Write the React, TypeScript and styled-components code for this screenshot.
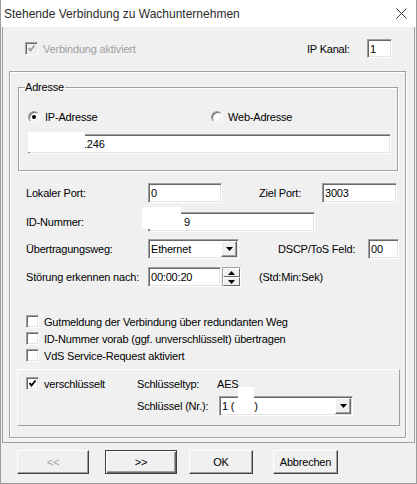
import React from "react";
import styled, { createGlobalStyle } from "styled-components";

const GlobalStyle = createGlobalStyle`
  html, body {
    margin: 0;
    padding: 0;
    background: #f0f0f0;
  }
  body {
    font-family: "Liberation Sans", Arial, sans-serif;
    font-size: 11px;
    letter-spacing: -0.2px;
    color: #000;
  }
  * {
    box-sizing: border-box;
  }
`;

const Window = styled.div`
  width: 417px;
  height: 484px;
  display: flex;
  flex-direction: column;
  background: #f0f0f0;
  border: 1px solid #9c9c9c;
  border-top: none;
`;

const TitleBar = styled.div`
  height: 27px;
  flex: none;
  background: #fff;
  display: flex;
  align-items: center;
  justify-content: space-between;
  padding: 0 9px 0 3px;
  font-size: 12px;
  letter-spacing: 0;
  color: #2a2a2a;
`;

const Page = styled.div`
  height: 416px;
  flex: none;
  margin: 0 1px;
  border: 1px solid #a0a0a0;
  border-top: none;
  padding: 0 8px 0 6px;
`;

const TopRow = styled.div`
  height: 19px;
  margin-top: 12px;
  display: flex;
  align-items: center;
  justify-content: space-between;
  padding: 0 14px 0 16px;
`;

const Etched = styled.div`
  border: 1px solid #a0a0a0;
  box-shadow: inset 1px 1px 0 #fff, 1px 1px 0 #fff;
`;

const MainGroup = styled(Etched)`
  height: 367px;
  margin-top: 13px;
`;

const AddressGroup = styled(Etched)`
  position: relative;
  height: 84px;
  margin: 15px 7px 0 8px;
  padding: 0 6px 0 9px;
`;

const Legend = styled.span`
  position: absolute;
  left: 6px;
  top: -7px;
  line-height: 13px;
  background: #f0f0f0;
  padding-right: 1px;
`;

const RadioRow = styled.div`
  display: grid;
  grid-template-columns: 183px auto;
  height: 14px;
  margin-top: 22px;
`;

const Choice = styled.label`
  display: flex;
  align-items: center;
  gap: 5px;
  white-space: nowrap;
`;

const RadioDot = styled.span<{ $on?: boolean }>`
  width: 12px;
  height: 12px;
  flex: none;
  border-radius: 50%;
  background: #fff;
  border: 1px solid;
  border-color: #a0a0a0 #fff #fff #a0a0a0;
  box-shadow: inset 1px 1px 0 #696969, inset -1px -1px 0 #e3e3e3;
  display: flex;
  align-items: center;
  justify-content: center;
  &::after {
    content: "";
    width: 4px;
    height: 4px;
    border-radius: 50%;
    background: ${(p) => (p.$on ? "#000" : "transparent")};
  }
`;

const Field = styled.div<{ $w?: number; $h?: number; $indent?: number }>`
  position: relative;
  flex: none;
  width: ${(p) => (p.$w ? `${p.$w}px` : "auto")};
  height: ${(p) => p.$h ?? 20}px;
  background: #fff;
  border: 1px solid;
  border-color: #a0a0a0 #fff #fff #a0a0a0;
  box-shadow: inset 1px 1px 0 #696969, inset -1px -1px 0 #e3e3e3;
  padding: 0 2px 0 ${(p) => 2 + (p.$indent ?? 0)}px;
  display: flex;
  align-items: center;
  white-space: nowrap;
`;

const IpField = styled(Field)`
  margin-top: 10px;
`;

const Redact = styled.span<{ $x: number; $y: number; $w: number; $h: number }>`
  position: absolute;
  left: ${(p) => p.$x}px;
  top: ${(p) => p.$y}px;
  width: ${(p) => p.$w}px;
  height: ${(p) => p.$h}px;
  background: #fff;
`;

const Form = styled.div`
  padding-left: 16px;
`;

const Row = styled.div<{ $gap: number }>`
  display: flex;
  align-items: center;
  height: 20px;
  margin-top: ${(p) => p.$gap}px;
`;

const Label = styled.span<{ $w: number; $ml?: number }>`
  flex: none;
  width: ${(p) => p.$w}px;
  margin-left: ${(p) => p.$ml ?? 0}px;
  white-space: nowrap;
`;

const Combo = styled(Field)`
  justify-content: space-between;
  padding-right: 1px;
`;

const DropButton = styled.span`
  width: 16px;
  height: 16px;
  flex: none;
  background: #f0f0f0;
  border: 1px solid;
  border-color: #fff #696969 #696969 #fff;
  box-shadow: inset -1px -1px 0 #a0a0a0;
  display: flex;
  align-items: center;
  justify-content: center;
`;

const Spin = styled.div`
  width: 19px;
  height: 20px;
  margin-left: 1px;
  display: flex;
  flex-direction: column;
  border: 1px solid;
  border-color: #a0a0a0 #fff #fff #a0a0a0;
`;

const SpinButton = styled.span`
  flex: 1;
  background: #f0f0f0;
  border: 1px solid;
  border-color: #fff #696969 #696969 #fff;
  display: flex;
  align-items: center;
  justify-content: center;
`;

const Hint = styled.span`
  margin-left: 18px;
`;

const CheckList = styled.div`
  margin-top: 26px;
  padding-left: 16px;
`;

const CheckRow = styled(Choice)`
  height: 17px;
`;

const Box = styled.span<{ $disabled?: boolean }>`
  width: 13px;
  height: 13px;
  flex: none;
  background: ${(p) => (p.$disabled ? "#f0f0f0" : "#fff")};
  border: 1px solid;
  border-color: #a0a0a0 #fff #fff #a0a0a0;
  box-shadow: inset 1px 1px 0 #696969, inset -1px -1px 0 #e3e3e3;
  display: flex;
  align-items: center;
  justify-content: center;
`;

const Text = styled.span<{ $disabled?: boolean }>`
  color: ${(p) => (p.$disabled ? "#a0a0a0" : "#000")};
`;

const CryptoPanel = styled.div`
  height: 57px;
  margin: 5px 5px 0 7px;
  padding: 5px 0 0 8px;
  border: 1px solid;
  border-color: #fff #a0a0a0 #a0a0a0 #fff;
  display: grid;
  grid-template-columns: 111px 80px auto;
  grid-template-rows: 17px 20px;
  row-gap: 4px;
  align-items: center;
`;

const KeyCombo = styled(Combo)`
  margin-left: 2px;
`;

const ButtonBar = styled.div`
  flex: 1;
  display: flex;
  align-items: flex-start;
  padding: 7px 0 0 16px;
`;

const Button = styled.button<{ $w: number; $ml: number; $default?: boolean }>`
  width: ${(p) => p.$w}px;
  height: 24px;
  margin-left: ${(p) => p.$ml}px;
  padding: 0;
  font: inherit;
  letter-spacing: inherit;
  color: ${(p) => (p.disabled ? "#a0a0a0" : "#000")};
  background: #f0f0f0;
  border: 1px solid;
  border-color: ${(p) => (p.$default ? "#404040" : "#fff #404040 #404040 #fff")};
  box-shadow: ${(p) =>
    p.$default
      ? "inset 1px 1px 0 #fff, inset -1px -1px 0 #696969, inset -2px -2px 0 #a0a0a0"
      : "inset -1px -1px 0 #a0a0a0"};
`;

const Arrow = ({ up }: { up?: boolean }) => (
  <svg width="7" height="4" viewBox="0 0 7 4">
    <polygon points={up ? "3.5,0 7,4 0,4" : "0,0 7,0 3.5,4"} fill="#000" />
  </svg>
);

const Check = ({ color }: { color: string }) => (
  <svg width="9" height="9" viewBox="0 0 9 9">
    <polyline points="1.5,4 3.5,6.5 7.5,1.5" fill="none" stroke={color} strokeWidth="1.9" />
  </svg>
);

const CheckBox = ({ checked, disabled, children }: { checked?: boolean; disabled?: boolean; children: React.ReactNode }) => (
  <CheckRow>
    <Box $disabled={disabled}>{checked && <Check color={disabled ? "#a0a0a0" : "#000"} />}</Box>
    <Text $disabled={disabled}>{children}</Text>
  </CheckRow>
);

export default function App() {
  return (
    <Window>
      <GlobalStyle />
      <TitleBar>
        <span>Stehende Verbindung zu Wachunternehmen</span>
        <svg width="11" height="11" viewBox="0 0 11 11">
          <path d="M0.5 0.5 L10.5 10.5 M10.5 0.5 L0.5 10.5" stroke="#333" strokeWidth="1" />
        </svg>
      </TitleBar>
      <Page>
        <TopRow>
          <CheckBox checked disabled>Verbindung aktiviert</CheckBox>
          <Choice>
            <Label $w={55}>IP Kanal:</Label>
            <Field $w={25} $h={19}>1</Field>
          </Choice>
        </TopRow>
        <MainGroup>
          <AddressGroup>
            <Legend>Adresse</Legend>
            <RadioRow>
              <Choice>
                <RadioDot $on />
                IP-Adresse
              </Choice>
              <Choice>
                <RadioDot />
                Web-Adresse
              </Choice>
            </RadioRow>
            <IpField $indent={53}>
              <Redact $x={-1} $y={-3} $w={57} $h={20} />
              .246
            </IpField>
          </AddressGroup>
          <Form>
            <Row $gap={12}>
              <Label $w={122}>Lokaler Port:</Label>
              <Field $w={74}>0</Field>
              <Label $w={63} $ml={37}>Ziel Port:</Label>
              <Field $w={75}>3003</Field>
            </Row>
            <Row $gap={9}>
              <Label $w={122}>ID-Nummer:</Label>
              <Field $w={167} $indent={33}>
                <Redact $x={-7} $y={-6} $w={39} $h={22} />
                9
              </Field>
            </Row>
            <Row $gap={7}>
              <Label $w={122}>Übertragungsweg:</Label>
              <Combo $w={91}>
                Ethernet
                <DropButton>
                  <Arrow />
                </DropButton>
              </Combo>
              <Label $w={90} $ml={39}>DSCP/ToS Feld:</Label>
              <Field $w={31}>00</Field>
            </Row>
            <Row $gap={8}>
              <Label $w={122}>Störung erkennen nach:</Label>
              <Field $w={73}>00:00:20</Field>
              <Spin>
                <SpinButton>
                  <Arrow up />
                </SpinButton>
                <SpinButton>
                  <Arrow />
                </SpinButton>
              </Spin>
              <Hint>(Std:Min:Sek)</Hint>
            </Row>
          </Form>
          <CheckList>
            <CheckBox>Gutmeldung der Verbindung über redundanten Weg</CheckBox>
            <CheckBox>ID-Nummer vorab (ggf. unverschlüsselt) übertragen</CheckBox>
            <CheckBox>VdS Service-Request aktiviert</CheckBox>
          </CheckList>
          <CryptoPanel>
            <CheckBox checked>verschlüsselt</CheckBox>
            <span>Schlüsseltyp:</span>
            <span>AES</span>
            <span />
            <span>Schlüssel (Nr.):</span>
            <KeyCombo $w={134}>
              <Redact $x={18} $y={-10} $w={16} $h={22} />
              <span>1 (&nbsp;&nbsp;&nbsp;&nbsp;&nbsp;&nbsp;&nbsp;)</span>
              <DropButton>
                <Arrow />
              </DropButton>
            </KeyCombo>
          </CryptoPanel>
        </MainGroup>
      </Page>
      <ButtonBar>
        <Button $w={72} $ml={0} disabled>
          &lt;&lt;
        </Button>
        <Button $w={72} $ml={16} $default>
          &gt;&gt;
        </Button>
        <Button $w={64} $ml={12}>
          OK
        </Button>
        <Button $w={65} $ml={20}>
          Abbrechen
        </Button>
      </ButtonBar>
    </Window>
  );
}
